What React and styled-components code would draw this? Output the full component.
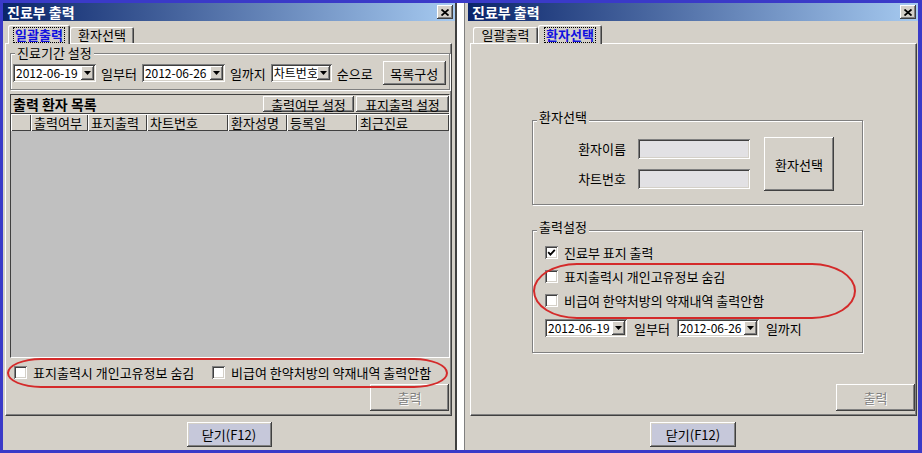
import React from "react";
import styled, { createGlobalStyle } from "styled-components";

const FACE = "#d4d0c8";

const raised = `
  box-shadow: inset -1px -1px #404040, inset 1px 1px #ffffff,
    inset -2px -2px #808080, inset 2px 2px ${FACE};
`;
const sunken = `
  box-shadow: inset 1px 1px #808080, inset -1px -1px #ffffff,
    inset 2px 2px #404040, inset -2px -2px ${FACE};
`;

const GlobalStyle = createGlobalStyle`
  html, body { margin: 0; padding: 0; background: #fff; }
  body {
    font-family: "Noto Sans CJK KR", "Noto Sans", sans-serif;
    font-size: 13px;
    color: #000;
  }
  * { box-sizing: border-box; }
`;

const Frame = styled.div`
  width: 922px;
  height: 453px;
  border-style: solid;
  border-color: #3a3ac8;
  border-width: 3px 4px 3px 3px;
  background: #fff;
  display: flex;
  gap: 7px;
`;

const Window = styled.div`
  width: 454px;
  height: 100%;
  background: ${FACE};
  display: flex;
  flex-direction: column;
  padding-left: ${(p) => (p.$right ? 3 : 0)}px;
  border-left: ${(p) => (p.$right ? "1px solid #808080" : "none")};
  border-right: ${(p) => (p.$right ? "none" : "2px solid #404040")};
`;

const TitleBar = styled.div`
  height: 18px;
  flex: none;
  display: flex;
  align-items: center;
  justify-content: space-between;
  padding: 0 2px 0 4px;
  background: linear-gradient(90deg, #0a246a 0%, #a6caf0 100%);
  color: #fff;
  font-weight: bold;
  font-size: 14px;
`;

const CloseBtn = styled.div`
  width: 16px;
  height: 14px;
  background: ${FACE};
  ${raised}
  display: flex;
  align-items: center;
  justify-content: center;
`;

const TabStrip = styled.div`
  display: flex;
  align-items: flex-end;
  height: 18px;
  margin-top: 4px;
  padding-left: 5px;
  flex: none;
`;

const Tab = styled.div`
  position: relative;
  z-index: 1;
  width: ${(p) => p.$w}px;
  height: ${(p) => (p.$active ? 19 : 16)}px;
  margin-bottom: ${(p) => (p.$active ? -1 : 0)}px;
  background: ${FACE};
  border-radius: 2px 2px 0 0;
  box-shadow: inset 1px 1px #ffffff, inset -1px 0 #404040, inset -2px 0 #808080;
  display: flex;
  align-items: center;
  justify-content: center;
  color: ${(p) => (p.$active ? "#1010e0" : "#000")};
  font-weight: ${(p) => (p.$active ? "bold" : "normal")};
`;

const TabLabel = styled.span`
  line-height: 14px;
  padding: 0 1px;
  outline: ${(p) => (p.$focus ? "1px dotted #000" : "none")};
`;

const Panel = styled.div`
  position: relative;
  margin-left: 2px;
  width: 447px;
  height: 373px;
  flex: none;
  border-top: 1px solid #fff;
  border-left: 1px solid #fff;
  border-right: 1px solid #404040;
  border-bottom: 1px solid #404040;
  box-shadow: inset -1px -1px #808080;
  display: flex;
  flex-direction: column;
  padding: ${(p) => p.$pad};
`;

const Footer = styled.div`
  flex: 1;
  display: flex;
  justify-content: center;
  padding-top: 6px;
`;

const Button = styled.div`
  width: ${(p) => p.$w}px;
  height: ${(p) => p.$h}px;
  flex: none;
  background: ${(p) => p.$bg || FACE};
  ${raised}
  display: flex;
  align-items: center;
  justify-content: center;
  color: ${(p) => (p.$disabled ? "#808080" : "#000")};
  text-shadow: ${(p) => (p.$disabled ? "1px 1px 0 #fff" : "none")};
  white-space: nowrap;
`;

const Group = styled.fieldset`
  margin: ${(p) => p.$margin || 0};
  padding: 0;
  min-width: 0;
  width: ${(p) => (p.$w ? `${p.$w}px` : "auto")};
  border: 1px solid #808080;
  box-shadow: 1px 1px 0 #fff, inset 1px 1px 0 #fff;
  flex: none;
`;

const Legend = styled.legend`
  margin-left: 4px;
  padding: 0 2px;
  line-height: 14px;
  background: ${FACE};
  position: relative;
  top: ${(p) => p.$lift || 0}px;
`;

const Row = styled.div`
  display: flex;
  align-items: center;
  gap: ${(p) => p.$gap}px;
  height: ${(p) => p.$h}px;
  padding-left: ${(p) => p.$pl || 0}px;
  margin-top: ${(p) => p.$mt || 0}px;
  white-space: nowrap;
`;

const Combo = styled.div`
  width: ${(p) => p.$w}px;
  height: 18px;
  flex: none;
  background: #fff;
  ${sunken}
  display: flex;
  align-items: center;
  padding: 2px;
`;

const ComboText = styled.span`
  flex: 1;
  min-width: 0;
  overflow: ${(p) => (p.$clip ? "hidden" : "visible")};
  white-space: nowrap;
  padding-left: 1px;
  font-size: 12px;
  line-height: 14px;
`;

const ComboBtn = styled.div`
  width: 13px;
  height: 14px;
  flex: none;
  background: ${FACE};
  ${raised}
  display: flex;
  align-items: center;
  justify-content: center;
`;

const Spacer = styled.div`
  flex: 1;
`;

const ListBox = styled.div`
  margin-top: 4px;
  flex: 1;
  display: flex;
  flex-direction: column;
  border-top: 1px solid #404040;
  border-left: 1px solid #404040;
  border-right: 1px solid #fff;
  border-bottom: 1px solid #fff;
`;

const ListBar = styled.div`
  height: 18px;
  display: flex;
  align-items: center;
  gap: 2px;
  padding-left: 2px;
  background: ${FACE};
`;

const ListTitle = styled.span`
  font-weight: bold;
  font-size: 14px;
  flex: 1;
`;

const HeaderRow = styled.div`
  height: 18px;
  display: flex;
  border-top: 1px solid #404040;
`;

const HeaderCell = styled.div`
  width: ${(p) => (p.$w ? `${p.$w}px` : "auto")};
  flex: ${(p) => (p.$w ? "none" : 1)};
  background: ${FACE};
  box-shadow: inset 1px 1px #fff, inset -1px -1px #404040;
  padding-left: 3px;
  line-height: 17px;
  white-space: nowrap;
  overflow: hidden;
`;

const ListBody = styled.div`
  flex: 1;
  background: #c0c0c0;
`;

const CheckRow = styled.div`
  position: relative;
  display: flex;
  align-items: center;
  height: ${(p) => p.$h || 19}px;
  margin-top: ${(p) => p.$mt || 0}px;
  padding-left: ${(p) => p.$pl || 0}px;
`;

const CheckItem = styled.label`
  display: flex;
  align-items: center;
  gap: 6px;
  width: ${(p) => (p.$w ? `${p.$w}px` : "auto")};
  white-space: nowrap;
`;

const Box = styled.span`
  width: 13px;
  height: 13px;
  flex: none;
  background: #fff;
  ${sunken}
  display: flex;
  align-items: center;
  justify-content: center;
`;

const Ellipse = styled.div`
  position: absolute;
  left: ${(p) => p.$l}px;
  right: ${(p) => p.$r}px;
  top: ${(p) => p.$t}px;
  bottom: ${(p) => p.$b}px;
  border: 2px solid #d42a2a;
  border-radius: ${(p) => p.$rx}px / 50%;
  pointer-events: none;
`;

const ButtonRow = styled.div`
  display: flex;
  justify-content: flex-end;
  margin-top: ${(p) => p.$mt || 0}px;
  padding-right: ${(p) => p.$pr || 0}px;
`;

const FieldGrid = styled.div`
  display: flex;
  align-items: center;
  padding: 10px 0 13px 44px;
`;

const LabelCol = styled.div`
  display: flex;
  flex-direction: column;
  gap: 10px;
  width: 49px;
  text-align: right;
`;

const InputCol = styled.div`
  display: flex;
  flex-direction: column;
  gap: 10px;
  margin: 0 14px 0 12px;
`;

const FieldLabel = styled.div`
  height: 20px;
  line-height: 20px;
  white-space: nowrap;
`;

const TextInput = styled.div`
  width: 112px;
  height: 20px;
  background: #e2e1e4;
  ${sunken}
`;

const Annotated = styled.div`
  position: relative;
`;

function Arrow() {
  return (
    <svg width="7" height="4" viewBox="0 0 7 4">
      <polygon points="0,0 7,0 3.5,4" fill="#000" />
    </svg>
  );
}

function Close() {
  return (
    <svg width="8" height="7" viewBox="0 0 8 7">
      <path d="M0.5 0.5 L7.5 6.5 M7.5 0.5 L0.5 6.5" stroke="#000" strokeWidth="1.8" />
    </svg>
  );
}

function DateCombo({ value, w = 83, clip }) {
  return (
    <Combo $w={w}>
      <ComboText $clip={clip}>{value}</ComboText>
      <ComboBtn>
        <Arrow />
      </ComboBtn>
    </Combo>
  );
}

function Check({ checked, children, w }) {
  return (
    <CheckItem $w={w}>
      <Box>
        {checked && (
          <svg width="9" height="9" viewBox="0 0 9 9">
            <path d="M1.2 4.2 L3.4 6.6 L7.8 1.8" stroke="#000" strokeWidth="1.8" fill="none" />
          </svg>
        )}
      </Box>
      {children}
    </CheckItem>
  );
}

function Title() {
  return (
    <TitleBar>
      진료부 출력
      <CloseBtn>
        <Close />
      </CloseBtn>
    </TitleBar>
  );
}

const columns = [
  { label: "", w: 20 },
  { label: "출력여부", w: 57 },
  { label: "표지출력", w: 59 },
  { label: "차트번호", w: 81 },
  { label: "환자성명", w: 59 },
  { label: "등록일", w: 70 },
  { label: "최근진료" },
];

function BatchWindow() {
  return (
    <Window>
      <Title />
      <TabStrip>
        <Tab $active $w={62}>
          <TabLabel $focus>일괄출력</TabLabel>
        </Tab>
        <Tab $w={64}>
          <TabLabel>환자선택</TabLabel>
        </Tab>
      </TabStrip>
      <Panel $pad="0 1px 4px 4px">
        <Group $margin="2px 0 0">
          <Legend>진료기간 설정</Legend>
          <Row $gap={5} $h={24} $pl={2} $mt={1}>
            <DateCombo value="2012-06-19" />
            <span>일부터</span>
            <DateCombo value="2012-06-26" />
            <span>일까지</span>
            <DateCombo value="차트번호" w={61} clip />
            <span>순으로</span>
            <Spacer />
            <Button $w={63} $h={24}>목록구성</Button>
            <span />
          </Row>
          <div style={{ height: 4 }} />
        </Group>
        <ListBox>
          <ListBar>
            <ListTitle>출력 환자 목록</ListTitle>
            <Button $w={91} $h={16}>출력여부 설정</Button>
            <Button $w={93} $h={16}>표지출력 설정</Button>
          </ListBar>
          <HeaderRow>
            {columns.map((c, i) => (
              <HeaderCell key={i} $w={c.w}>
                {c.label}
              </HeaderCell>
            ))}
          </HeaderRow>
          <ListBody />
        </ListBox>
        <CheckRow $mt={5} $pl={4}>
          <Check w={198}>표지출력시 개인고유정보 숨김</Check>
          <Check>비급여 한약처방의 약재내역 출력안함</Check>
          <Ellipse $l={-3} $r={2} $t={-5} $b={-6} $rx={34} />
        </CheckRow>
        <ButtonRow $mt={2} $pr={1}>
          <Button $w={79} $h={27} $disabled>출력</Button>
        </ButtonRow>
      </Panel>
      <Footer>
        <Button $w={85} $h={25} $bg="#c6c8da">닫기(F12)</Button>
      </Footer>
    </Window>
  );
}

function PatientWindow() {
  return (
    <Window $right>
      <Title />
      <TabStrip>
        <Tab $w={65}>
          <TabLabel>일괄출력</TabLabel>
        </Tab>
        <Tab $active $w={64}>
          <TabLabel $focus>환자선택</TabLabel>
        </Tab>
      </TabStrip>
      <Panel $pad="0 1px 4px 61px">
        <Group $w={331} $margin="69px 0 0">
          <Legend $lift={-3}>환자선택</Legend>
          <FieldGrid>
            <LabelCol>
              <FieldLabel>환자이름</FieldLabel>
              <FieldLabel>차트번호</FieldLabel>
            </LabelCol>
            <InputCol>
              <TextInput />
              <TextInput />
            </InputCol>
            <Button $w={70} $h={54}>환자선택</Button>
          </FieldGrid>
        </Group>
        <Group $w={331} $margin="18px 0 0">
          <Legend $lift={-3}>출력설정</Legend>
          <CheckRow $mt={3} $h={24} $pl={12}>
            <Check checked>진료부 표지 출력</Check>
          </CheckRow>
          <Annotated>
            <CheckRow $h={24} $pl={12}>
              <Check>표지출력시 개인고유정보 숨김</Check>
            </CheckRow>
            <CheckRow $h={25} $pl={12}>
              <Check>비급여 한약처방의 약재내역 출력안함</Check>
            </CheckRow>
            <Ellipse $l={0} $r={6} $t={-1} $b={-6} $rx={44} />
          </Annotated>
          <Row $gap={7} $h={20} $pl={12} $mt={5}>
            <DateCombo value="2012-06-19" w={82} />
            <span>일부터</span>
            <DateCombo value="2012-06-26" w={82} />
            <span>일까지</span>
          </Row>
          <div style={{ height: 14 }} />
        </Group>
        <Spacer />
        <ButtonRow>
          <Button $w={79} $h={27} $disabled>출력</Button>
        </ButtonRow>
      </Panel>
      <Footer>
        <Button $w={86} $h={25} $bg="#c6c8da">닫기(F12)</Button>
      </Footer>
    </Window>
  );
}

export default function App() {
  return (
    <>
      <GlobalStyle />
      <Frame>
        <BatchWindow />
        <PatientWindow />
      </Frame>
    </>
  );
}
